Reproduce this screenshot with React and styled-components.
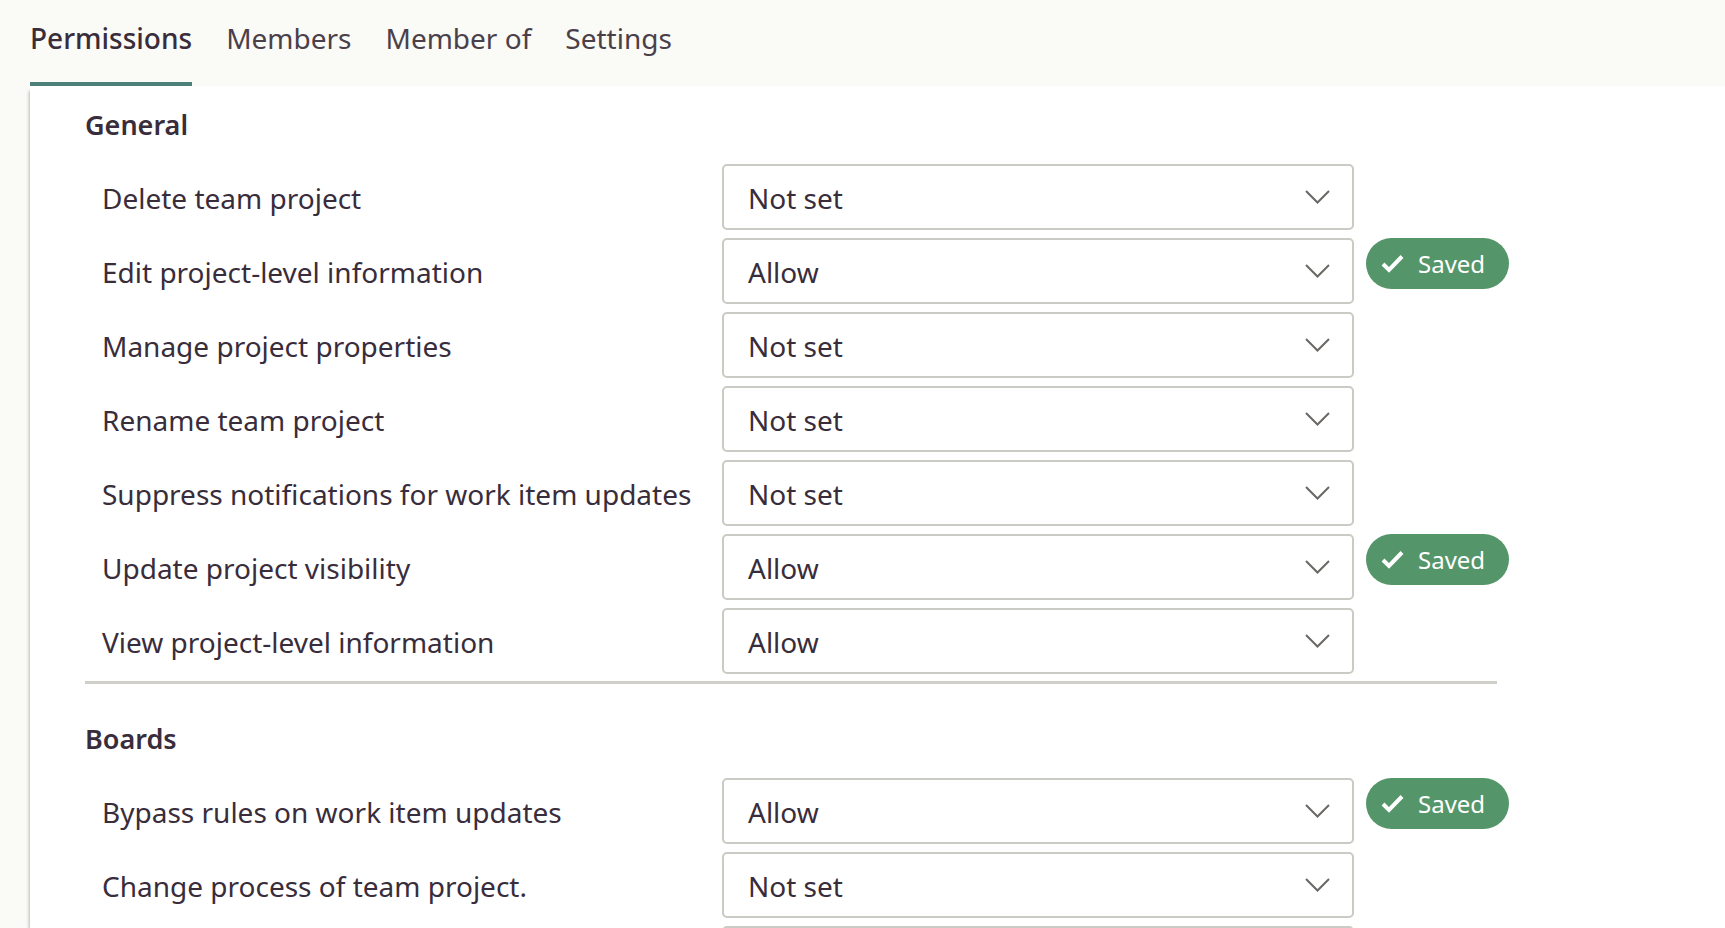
import React, { useState } from "react";
import styled, { createGlobalStyle } from "styled-components";

const GlobalStyle = createGlobalStyle`
  * { box-sizing: border-box; }
  body {
    margin: 0;
    background: #fafaf6;
    color: #392d3b;
    font-family: "Segoe UI", "Noto Sans", "Open Sans", sans-serif;
    font-size: 28px;
    line-height: 36px;
  }
`;

const Page = styled.div`
  display: flex;
  flex-direction: column;
  height: 100vh;
  overflow: hidden;
  padding-left: 30px;
`;

const TabBar = styled.nav`
  display: flex;
  flex: none;
  gap: 34px;
`;

const Tab = styled.a`
  padding: 20px 0 26px;
  border-bottom: 4px solid ${(p) => (p.$active ? "#4d7f7b" : "transparent")};
  color: ${(p) => (p.$active ? "#392d3b" : "#4a4049")};
  font-weight: ${(p) => (p.$active ? 500 : 400)};
  text-decoration: none;
`;

const Panel = styled.main`
  flex: 1;
  min-height: 0;
  padding-left: 55px;
  background: #fff;
  box-shadow: -3px 3px 3px -2px #b9b9b5;
`;

const Section = styled.section`
  padding-top: ${(p) => (p.$first ? 21 : 37)}px;
`;

const Heading = styled.h2`
  margin: 0 0 21px;
  font-size: 27px;
  line-height: 36px;
  font-weight: 600;
`;

const Rows = styled.div`
  display: grid;
  gap: 8px;
`;

const Row = styled.div`
  display: grid;
  grid-template-columns: minmax(0, 625px) minmax(0, 632px) 143px;
  column-gap: 12px;
  align-items: center;
  max-width: 1424px;
`;

const Label = styled.label`
  padding: 1px 0 0 17px;
  white-space: nowrap;
`;

const SelectBox = styled.div`
  display: grid;
  grid-column: 2;
  align-items: center;

  > * { grid-area: 1 / 1; }
`;

const Select = styled.select`
  appearance: none;
  width: 100%;
  height: 66px;
  padding: 1px 56px 0 24px;
  border: 2px solid #cbcac5;
  border-radius: 5px;
  background: #fff;
  color: inherit;
  font: inherit;
`;

const Chevron = styled.svg`
  justify-self: end;
  margin-right: 24px;
  pointer-events: none;
`;

const Badge = styled.span`
  display: flex;
  align-items: center;
  align-self: start;
  gap: 14px;
  height: 51px;
  padding: 0 15px;
  border-radius: 26px;
  background: #54966a;
  color: #fff;
  font-size: 24px;
`;

const Divider = styled.hr`
  max-width: 1412px;
  height: 3px;
  margin: 7px 0 0;
  border: 0;
  background: #cfcec9;
`;

const tabs = ["Permissions", "Members", "Member of", "Settings"];

const general = [
  { id: "delete-project", label: "Delete team project", value: "Not set" },
  { id: "edit-info", label: "Edit project-level information", value: "Allow", saved: true },
  { id: "manage-properties", label: "Manage project properties", value: "Not set" },
  { id: "rename-project", label: "Rename team project", value: "Not set" },
  { id: "suppress", label: "Suppress notifications for work item updates", value: "Not set" },
  { id: "visibility", label: "Update project visibility", value: "Allow", saved: true },
  { id: "view-info", label: "View project-level information", value: "Allow" },
];

const boards = [
  { id: "bypass-rules", label: "Bypass rules on work item updates", value: "Allow", saved: true },
  { id: "change-process", label: "Change process of team project.", value: "Not set" },
  { id: "boards-next", value: "Not set" },
];

function Permission({ id, label, value, saved, headingId }) {
  const [current, setCurrent] = useState(value);
  return (
    <Row>
      {label && <Label htmlFor={id}>{label}</Label>}
      <SelectBox>
        <Select
          id={id}
          aria-labelledby={label ? undefined : headingId}
          value={current}
          onChange={(e) => setCurrent(e.target.value)}
        >
          <option>Not set</option>
          <option>Allow</option>
        </Select>
        <Chevron width="25" height="14" viewBox="0 0 25 14" fill="none" aria-hidden="true">
          <path d="M1 1 12.5 12.5 24 1" stroke="#6b6864" strokeWidth="2" />
        </Chevron>
      </SelectBox>
      {saved && (
        <Badge role="status">
          <svg width="23" height="19" viewBox="0 0 23 19" fill="none" aria-hidden="true">
            <path d="M2 10 8 16 21 2.5" stroke="#fff" strokeWidth="4" />
          </svg>
          Saved
        </Badge>
      )}
    </Row>
  );
}

function PermissionSection({ title, items, first }) {
  const headingId = `heading-${title.toLowerCase()}`;
  return (
    <Section $first={first} aria-labelledby={headingId}>
      <Heading id={headingId}>{title}</Heading>
      <Rows>
        {items.map((item) => (
          <Permission key={item.id} headingId={headingId} {...item} />
        ))}
      </Rows>
    </Section>
  );
}

export default function App() {
  const [active, setActive] = useState("Permissions");
  return (
    <Page>
      <GlobalStyle />
      <TabBar>
        {tabs.map((tab) => (
          <Tab
            key={tab}
            href="#"
            $active={tab === active}
            aria-current={tab === active ? "page" : undefined}
            onClick={(e) => {
              e.preventDefault();
              setActive(tab);
            }}
          >
            {tab}
          </Tab>
        ))}
      </TabBar>
      <Panel>
        <PermissionSection title="General" items={general} first />
        <Divider />
        <PermissionSection title="Boards" items={boards} />
      </Panel>
    </Page>
  );
}
